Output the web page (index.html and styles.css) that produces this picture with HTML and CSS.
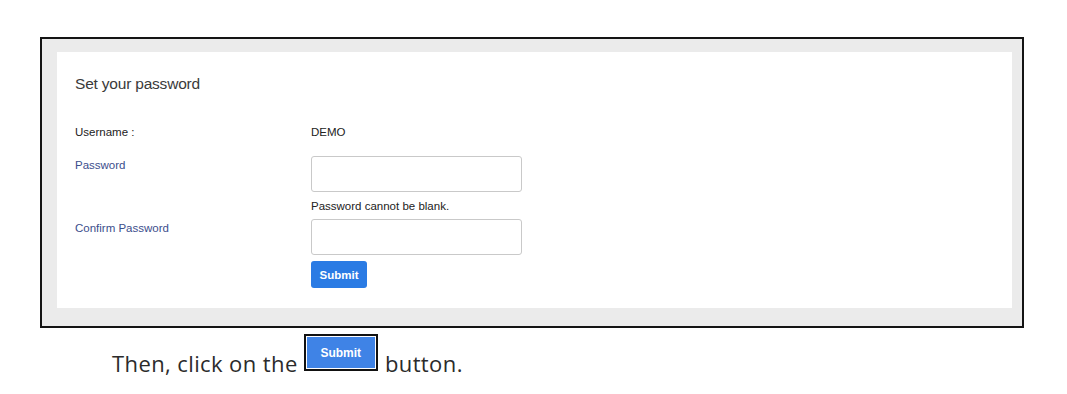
FILE: index.html
```html
<!DOCTYPE html>
<html>
<head>
<meta charset="utf-8">
<link rel="stylesheet" href="styles.css">
</head>
<body>
<div class="frame">
  <div class="card">
    <h1 class="title">Set your password</h1>
    <div class="row row-user">
      <div class="label">Username :</div>
      <div class="value">DEMO</div>
    </div>
    <div class="row row-pass">
      <div class="label link">Password</div>
      <div class="field">
        <input class="input" type="password">
        <div class="error">Password cannot be blank.</div>
      </div>
    </div>
    <div class="row row-confirm">
      <div class="label link">Confirm Password</div>
      <div class="field">
        <input class="input" type="password">
        <button class="btn" type="button">Submit</button>
      </div>
    </div>
  </div>
</div>
<p class="note">Then, click on the <span class="shot"><span class="shot-inner">Submit</span></span> button.</p>
</body>
</html>
```
FILE: styles.css
```css
* { box-sizing: border-box; }
html, body { margin: 0; padding: 0; background: #fff; }
body { padding-top: 37px; font-family: "Liberation Sans", Arial, sans-serif; }

.frame {
  margin-left: 40px;
  width: 984px;
  height: 291px;
  border: 2px solid #141414;
  background: #ebebeb;
  padding: 13px 10px 18px 15px;
}
.card {
  background: #fff;
  height: 100%;
  padding: 22px 18px 0 18px;
}
.title {
  margin: 0;
  font-family: "Liberation Sans", Arial, sans-serif;
  font-weight: 400;
  font-size: 15.5px;
  line-height: 20px;
  color: #3a3a3a;
  letter-spacing: -0.2px;
}
.row { display: flex; font-size: 11.5px; line-height: 16px; color: #222; }
.label { width: 236px; flex: none; }
.link { color: #3b4e8c; }
.row-user { margin-top: 30px; }
.row-pass { margin-top: 16px; }
.row-pass .label { padding-top: 1px; }
.row-confirm { margin-top: 5px; }
.row-confirm .label { padding-top: 1px; }
.field { display: flex; flex-direction: column; align-items: flex-start; }
.input {
  width: 211px;
  height: 36px;
  border: 1px solid #c9c9c9;
  border-radius: 3px;
  background: #fff;
  margin: 0;
  padding: 0 8px;
}
.error { margin-top: 6px; color: #222; }
.btn {
  margin-top: 6px;
  width: 56px;
  height: 27px;
  border: none;
  border-radius: 3px;
  background: #2a7be4;
  color: #fff;
  font-family: "Liberation Sans", Arial, sans-serif;
  font-size: 11.5px;
  font-weight: 600;
  padding: 0;
}

.note {
  margin: 7px 0 0 112px;
  font-family: "Open Sans", Lato, sans-serif;
  font-size: 22px;
  letter-spacing: 0.4px;
  line-height: 37px;
  color: #2b2b2b;
}
.shot {
  display: inline-block;
  overflow: hidden;
  vertical-align: baseline;
  width: 74px;
  height: 37px;
  margin: 0 1px 0 0;
  border: 2px solid #111;
  padding: 1px;
  background: #fff;
  position: relative;
  top: -1px;
  letter-spacing: 0;
}
.shot-inner {
  display: block;
  height: 100%;
  background: #3f83e6;
  color: #fff;
  font-family: "Liberation Sans", Arial, sans-serif;
  font-size: 12px;
  font-weight: 600;
  line-height: 12px;
  text-align: center;
  padding-top: 10px;
}
```
